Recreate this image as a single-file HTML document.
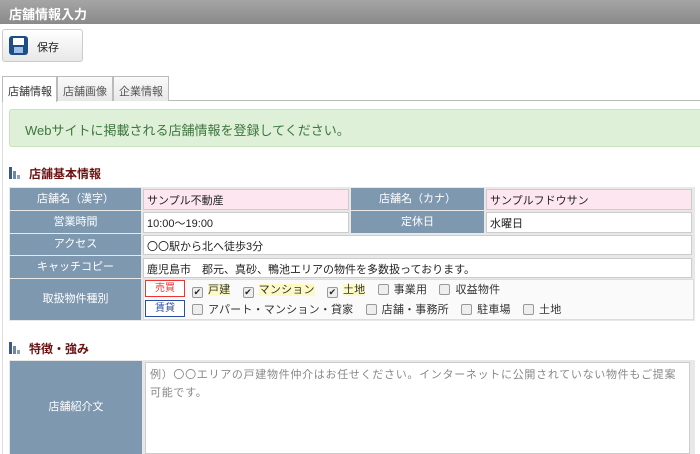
<!DOCTYPE html>
<html><head><meta charset="utf-8"><style>
*{box-sizing:border-box;margin:0;padding:0}
body{width:700px;height:454px;overflow:hidden;background:#fff;font-family:"Liberation Sans","Noto Sans CJK JP",sans-serif;font-size:11px;color:#222;position:relative}
.hdr{position:absolute;left:0;top:0;width:700px;height:24px;background:linear-gradient(#a5a5a5,#8a8a8a);color:#fff;font-size:13px;font-weight:bold;padding:4px 0 0 9px}
.btn{position:absolute;left:2px;top:29px;width:81px;height:33px;border:1px solid #ccc;border-radius:3px;background:linear-gradient(#fff,#e8e8e8)}
.btn span{position:absolute;left:34px;top:9px;font-size:11px}
.ico{position:absolute;left:6px;top:6px;width:19px;height:19px;border-radius:3px;background:#1d4f86}
.tab{position:absolute;top:76px;height:25px;border:1px solid #bbb;border-bottom:none;background:linear-gradient(#fafafa,#e8e8e8);font-size:11px;color:#555;padding:6px 0 0 5px}
.line{position:absolute;left:2px;top:100px;width:698px;height:1px;background:#bbb}
.vl{position:absolute;left:2px;top:100px;width:1px;height:354px;background:#ddd}
.green{position:absolute;left:9px;top:109px;width:700px;height:38px;background:#dff0d8;border:1px solid #c8e3bb;border-radius:3px;color:#3c763d;font-size:13px;padding:10px 0 0 15px}
.sec{position:absolute;left:9px;font-size:12px;font-weight:bold;color:#6b1212}
.sec i{display:inline-block;width:12px;height:12px;vertical-align:-1px;margin-right:8px;background:
linear-gradient(#3d5a80,#3d5a80) 0 0/3px 12px no-repeat,
linear-gradient(#6f86a6,#6f86a6) 4px 4px/3px 8px no-repeat,
linear-gradient(#8ea0ba,#8ea0ba) 8px 8px/3px 4px no-repeat}
.lab{position:absolute;background:#7e98b0;color:#fff;text-align:center;font-size:11px}
.val{position:absolute;border:1px solid #ccc;background:#fff;font-size:11px;padding:2px 0 0 3px}
.pink{background:#fde6f0}
.tbl{position:absolute;left:9px;top:187px;width:686px;height:134px;background:#e8e8e8}
.cb{display:inline-block;width:11px;height:11px;border:1px solid #999;border-radius:2px;background:#eee;vertical-align:-2px;margin-right:5px;font-size:9px;line-height:9px;text-align:center;color:#222}
.row{position:absolute;left:192px;font-size:11px;color:#333;white-space:nowrap;letter-spacing:0.2px}
.row span.it{margin-right:9px}
.hl{background:#fdf9c4}
.tag{position:absolute;left:145px;width:40px;height:17px;background:#fff;font-size:10px;text-align:center;line-height:15px}
</style></head><body>
<div class="hdr">店舗情報入力</div>
<div class="btn"><div class="ico"><div style="position:absolute;left:4px;top:2px;width:11px;height:7px;background:#fff"></div><div style="position:absolute;left:5px;top:11px;width:9px;height:6px;background:#9ec0e8"></div></div><span>保存</span></div>
<div class="line"></div><div class="vl"></div>
<div class="tab" style="left:2px;width:55px;background:#fff;color:#333;height:26px">店舗情報</div>
<div class="tab" style="left:57px;width:56px">店舗画像</div>
<div class="tab" style="left:113px;width:56px">企業情報</div>
<div class="green">Webサイトに掲載される店舗情報を登録してください。</div>
<div class="sec" style="top:165px"><i></i>店舗基本情報</div>
<div class="tbl"></div>
<div class="lab" style="left:10px;top:188px;width:131px;height:22px;line-height:22px">店舗名（漢字）</div>
<div class="val pink" style="left:143px;top:189px;width:206px;height:21px">サンプル不動産</div>
<div class="lab" style="left:351px;top:188px;width:133px;height:22px;line-height:22px">店舗名（カナ）</div>
<div class="val pink" style="left:486px;top:189px;width:206px;height:21px">サンプルフドウサン</div>
<div class="lab" style="left:10px;top:211px;width:131px;height:22px;line-height:22px">営業時間</div>
<div class="val" style="left:143px;top:212px;width:206px;height:21px">10:00～19:00</div>
<div class="lab" style="left:351px;top:211px;width:133px;height:22px;line-height:22px">定休日</div>
<div class="val" style="left:486px;top:212px;width:206px;height:21px">水曜日</div>
<div class="lab" style="left:10px;top:234px;width:131px;height:21px;line-height:21px">アクセス</div>
<div class="val" style="left:143px;top:235px;width:549px;height:20px">〇〇駅から北へ徒歩3分</div>
<div class="lab" style="left:10px;top:256px;width:131px;height:22px;line-height:22px">キャッチコピー</div>
<div class="val" style="left:143px;top:258px;width:549px;height:20px">鹿児島市　郡元、真砂、鴨池エリアの物件を多数扱っております。</div>
<div class="lab" style="left:10px;top:279px;width:131px;height:41px;line-height:41px">取扱物件種別</div>
<div style="position:absolute;left:143px;top:279px;width:551px;height:41px;background:#fafafa;border:1px solid #ddd"></div>
<div class="tag" style="top:280px;border:1px solid #e33;color:#e33">売買</div>
<div class="tag" style="top:300px;border:1px solid #2a4ea0;color:#2a4ea0">賃貸</div>
<div class="row" style="top:281px"><span class="cb">✔</span><span class="it hl">戸建</span> <span class="cb">✔</span><span class="it hl">マンション</span> <span class="cb">✔</span><span class="it hl">土地</span> <span class="cb"></span><span class="it">事業用</span> <span class="cb"></span><span class="it">収益物件</span></div>
<div class="row" style="top:301px"><span class="cb"></span><span class="it">アパート・マンション・貸家</span> <span class="cb"></span><span class="it">店舗・事務所</span> <span class="cb"></span><span class="it">駐車場</span> <span class="cb"></span><span class="it">土地</span></div>
<div class="sec" style="top:340px"><i></i>特徴・強み</div>
<div style="position:absolute;left:9px;top:360px;width:686px;height:94px;background:#e8e8e8"></div>
<div class="lab" style="left:10px;top:361px;width:132px;height:93px;line-height:93px;font-size:11px">店舗紹介文</div>
<div class="val" style="left:145px;top:362px;width:545px;height:92px;color:#888;padding:3px 4px;line-height:18px;letter-spacing:0.7px">例）〇〇エリアの戸建物件仲介はお任せください。インターネットに公開されていない物件もご提案可能です。</div>
</body></html>
